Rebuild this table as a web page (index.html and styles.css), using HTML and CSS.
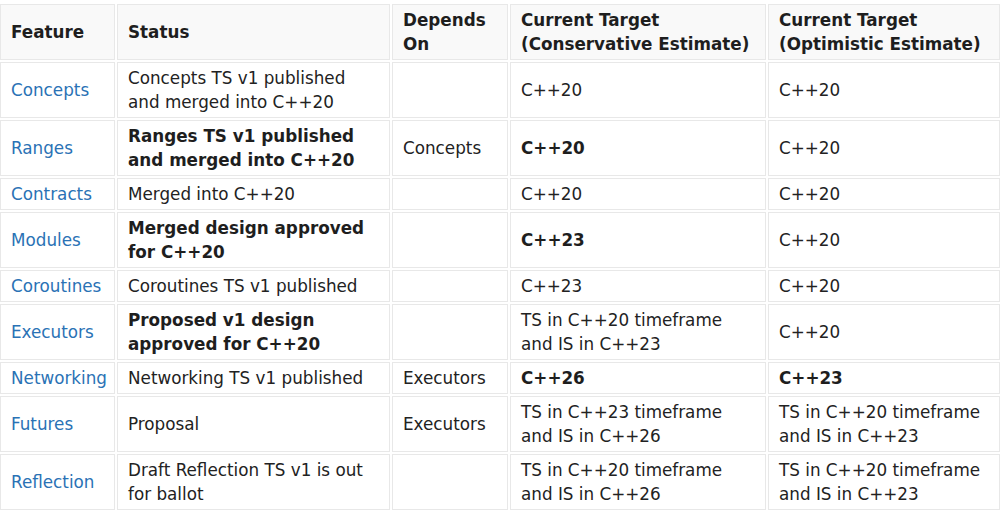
FILE: index.html
```html
<!DOCTYPE html>
<html>
<head>
<meta charset="utf-8">
<link rel="stylesheet" href="styles.css">
</head>
<body>
<table class="features">
  <colgroup>
    <col class="c-feature">
    <col class="c-status">
    <col class="c-depends">
    <col class="c-cons">
    <col class="c-opt">
  </colgroup>
  <thead>
    <tr>
      <th>Feature</th>
      <th>Status</th>
      <th>Depends On</th>
      <th>Current Target (Conservative Estimate)</th>
      <th>Current Target (Optimistic Estimate)</th>
    </tr>
  </thead>
  <tbody>
    <tr>
      <td><a href="#">Concepts</a></td>
      <td>Concepts TS v1 published and merged into C++20</td>
      <td></td>
      <td>C++20</td>
      <td>C++20</td>
    </tr>
    <tr>
      <td><a href="#">Ranges</a></td>
      <td><b>Ranges TS v1 published and merged into C++20</b></td>
      <td>Concepts</td>
      <td><b>C++20</b></td>
      <td>C++20</td>
    </tr>
    <tr>
      <td><a href="#">Contracts</a></td>
      <td>Merged into C++20</td>
      <td></td>
      <td>C++20</td>
      <td>C++20</td>
    </tr>
    <tr>
      <td><a href="#">Modules</a></td>
      <td><b>Merged design approved for C++20</b></td>
      <td></td>
      <td><b>C++23</b></td>
      <td>C++20</td>
    </tr>
    <tr>
      <td><a href="#">Coroutines</a></td>
      <td>Coroutines TS v1 published</td>
      <td></td>
      <td>C++23</td>
      <td>C++20</td>
    </tr>
    <tr>
      <td><a href="#">Executors</a></td>
      <td><b>Proposed v1 design approved for C++20</b></td>
      <td></td>
      <td>TS in C++20 timeframe and IS in C++23</td>
      <td>C++20</td>
    </tr>
    <tr>
      <td><a href="#">Networking</a></td>
      <td>Networking TS v1 published</td>
      <td>Executors</td>
      <td><b>C++26</b></td>
      <td><b>C++23</b></td>
    </tr>
    <tr>
      <td><a href="#">Futures</a></td>
      <td>Proposal</td>
      <td>Executors</td>
      <td>TS in C++23 timeframe and IS in C++26</td>
      <td>TS in C++20 timeframe and IS in C++23</td>
    </tr>
    <tr>
      <td><a href="#">Reflection</a></td>
      <td>Draft Reflection TS v1 is out for ballot</td>
      <td></td>
      <td>TS in C++20 timeframe and IS in C++26</td>
      <td>TS in C++20 timeframe and IS in C++23</td>
    </tr>
  </tbody>
</table>
</body>
</html>
```

FILE: styles.css
```css
html, body {
  margin: 0;
  padding: 0;
  background: #ffffff;
}

body {
  overflow: hidden;
  padding-top: 2px;
}

.features {
  margin: 0 0 0 -2px;
  border-collapse: separate;
  border-spacing: 2px;
  table-layout: fixed;
  width: 1004px;
  font-family: "DejaVu Sans", Verdana, sans-serif;
  font-size: 16.8px;
  line-height: 24px;
  color: #222222;
}

.c-feature { width: 115px; }
.c-status { width: 273px; }
.c-depends { width: 116px; }
.c-cons { width: 256px; }
.c-opt { width: 232px; }

.features th,
.features td {
  box-sizing: border-box;
  border: 1px solid #e8e8e8;
  padding: 3px 10px;
  text-align: left;
  vertical-align: middle;
}

.features th {
  background: #f9f9f9;
  font-weight: bold;
  color: #1e1e1e;
}

.features td {
  background: #ffffff;
}

.features b {
  font-weight: bold;
  color: #1e1e1e;
}

.features a {
  color: #2a72b5;
  text-decoration: none;
}
```
